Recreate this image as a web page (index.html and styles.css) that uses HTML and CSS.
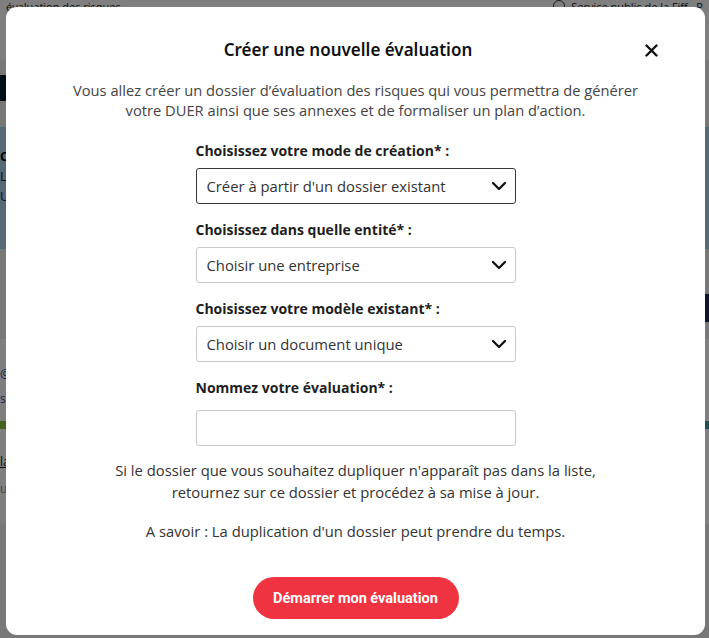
FILE: index.html
```html
<!DOCTYPE html>
<html lang="fr">
<head>
<meta charset="utf-8">
<title>Créer une nouvelle évaluation</title>
<link rel="stylesheet" href="styles.css">
</head>
<body>
<div class="page">
  <div class="topbar">
    <span class="crumb">évaluation des risques</span>
    <span class="user"><span class="avatar"></span>Service public de la Fiff · P</span>
  </div>
  <div class="hero-dark"></div>
  <div class="band-blue">
    <p class="band-title">Co</p>
    <p class="band-line">Le</p>
    <p class="band-line">Ut</p>
  </div>
  <div class="navy-row"><span class="navy-block"></span></div>
  <div class="list">
    <p class="list-link">@o</p>
    <p class="list-link">s</p>
    <div class="green-strip"><span class="teal"></span></div>
    <p class="list-under">la</p>
    <p class="list-muted">ua</p>
  </div>
</div>

<div class="overlay">
  <div class="modal" role="dialog" aria-labelledby="modal-title">
    <div class="modal-head">
      <span></span>
      <h1 id="modal-title" class="modal-title">Créer une nouvelle évaluation</h1>
      <button class="close" aria-label="Fermer">
        <svg width="13" height="13" viewBox="0 0 13 13"><path d="M1.5 1.5 L11.5 11.5 M11.5 1.5 L1.5 11.5" stroke="#111" stroke-width="2.4" stroke-linecap="round"/></svg>
      </button>
    </div>
    <p class="intro">Vous allez créer un dossier d’évaluation des risques qui vous permettra de générer<br>votre DUER ainsi que ses annexes et de formaliser un plan d’action.</p>

    <form class="form">
      <div class="field">
        <label class="label">Choisissez votre mode de création* :</label>
        <div class="select active">
          <span>Créer à partir d'un dossier existant</span>
          <svg class="chev" width="16" height="10" viewBox="0 0 16 10"><polyline points="2,2 8,8 14,2" fill="none" stroke="#111" stroke-width="2.3" stroke-linecap="round" stroke-linejoin="round"/></svg>
        </div>
      </div>
      <div class="field">
        <label class="label">Choisissez dans quelle entité* :</label>
        <div class="select">
          <span>Choisir une entreprise</span>
          <svg class="chev" width="16" height="10" viewBox="0 0 16 10"><polyline points="2,2 8,8 14,2" fill="none" stroke="#111" stroke-width="2.3" stroke-linecap="round" stroke-linejoin="round"/></svg>
        </div>
      </div>
      <div class="field">
        <label class="label">Choisissez votre modèle existant* :</label>
        <div class="select">
          <span>Choisir un document unique</span>
          <svg class="chev" width="16" height="10" viewBox="0 0 16 10"><polyline points="2,2 8,8 14,2" fill="none" stroke="#111" stroke-width="2.3" stroke-linecap="round" stroke-linejoin="round"/></svg>
        </div>
      </div>
      <div class="field name-field">
        <label class="label">Nommez votre évaluation* :</label>
        <div class="input"></div>
      </div>
    </form>

    <p class="note">Si le dossier que vous souhaitez dupliquer n'apparaît pas dans la liste,<br>retournez sur ce dossier et procédez à sa mise à jour.</p>
    <p class="note info">A savoir : La duplication d'un dossier peut prendre du temps.</p>

    <div class="actions">
      <button class="cta">Démarrer mon évaluation</button>
    </div>
  </div>
</div>
</body>
</html>
```

FILE: styles.css
```css
* { box-sizing: border-box; }
html, body { margin: 0; padding: 0; }
body {
  width: 709px;
  height: 638px;
  overflow: hidden;
  background: #f2f2f2;
  font-family: "Open Sans", "Noto Sans", sans-serif;
}

/* background page (dimmed by overlay) */
.page { height: 638px; background: #f0f0f0; }
.topbar {
  height: 60px;
  background: #fff;
  display: flex;
  justify-content: space-between;
  padding: 0 6px;
  font-size: 11px;
  color: #222;
  line-height: 14px;
}
.user { display: flex; gap: 6px; align-items: flex-start; }
.avatar { width: 12px; height: 12px; border: 1px solid #333; border-radius: 50%; }
.hero-dark { height: 26px; margin: 15px 0 26px; background: #0a1a2a; width: 700px; }
.band-blue {
  height: 122px;
  background: #a8d4ef;
  padding: 20px 0 0 0;
  font-size: 13px;
}
.band-title { margin: 0; font-weight: 700; color: #000; }
.band-line { margin: 2px 0 0; color: #222; }
.navy-row { height: 90px; display: flex; justify-content: flex-end; padding-top: 45px; }
.navy-block { width: 10px; height: 28px; background: #22285a; }
.list { background: #fff; height: 185px; padding-top: 26px; font-size: 12px; }
.list-link { margin: 0 0 8px; color: #1a4a8a; }
.green-strip { height: 8px; background: #8fc43a; margin-top: 14px; display: flex; justify-content: flex-end; }
.teal { width: 10px; background: #3aa0b0; }
.list-under { margin: 24px 0 0; text-decoration: underline; color: #111; }
.list-muted { margin: 10px 0 0; color: #888; }

/* overlay */
.overlay {
  position: fixed;
  inset: 0;
  background: rgba(0, 0, 0, 0.5);
  display: flex;
  align-items: flex-start;
  padding: 7px 0 0 6px;
}
.modal {
  width: 699px;
  height: 628px;
  background: #fff;
  border-radius: 11px;
  padding: 31px 0 0;
  display: flex;
  flex-direction: column;
  align-items: center;
}
.modal-head {
  width: 100%;
  display: grid;
  grid-template-columns: 1fr auto 1fr;
  align-items: center;
  height: 24px;
}
.modal-title {
  margin: 0 15px 0 0;
  font-family: "Noto Sans", sans-serif;
  font-size: 17px;
  font-weight: 600;
  color: #111;
  line-height: 24px;
}
.close {
  justify-self: end;
  margin-right: 47px;
  width: 13px;
  height: 13px;
  padding: 0;
  border: 0;
  background: none;
  display: flex;
}
.intro {
  margin: 18px 0 0;
  text-align: center;
  font-size: 14.7px;
  line-height: 20px;
  color: #444;
}

.form { width: 320px; margin-top: 20px; display: flex; flex-direction: column; gap: 15px; }
.field { display: flex; flex-direction: column; gap: 7px; }
.field.name-field { gap: 12px; }
.label {
  font-size: 14px;
  font-weight: 700;
  line-height: 21px;
  color: #1e1e1e;
}
.select {
  height: 36px;
  border: 1px solid #c8c8c8;
  border-radius: 3px;
  display: flex;
  align-items: center;
  justify-content: space-between;
  padding: 0 8px 0 10px;
  font-size: 14.8px;
  color: #333;
}
.select.active { border-color: #3a3a3a; }
.chev { display: block; }
.input { height: 36px; border: 1px solid #c8c8c8; border-radius: 3px; }

.note {
  margin: 13px 0 0;
  text-align: center;
  font-size: 14.8px;
  line-height: 22px;
  color: #333;
}
.note.info { margin-top: 17px; }
.actions { margin-top: 35px; }
.cta {
  width: 206px;
  height: 42px;
  border: 0;
  border-radius: 21px;
  background: #ef3340;
  color: #fff;
  font-family: "Roboto", sans-serif;
  font-size: 14.5px;
  font-weight: 700;
}
```
